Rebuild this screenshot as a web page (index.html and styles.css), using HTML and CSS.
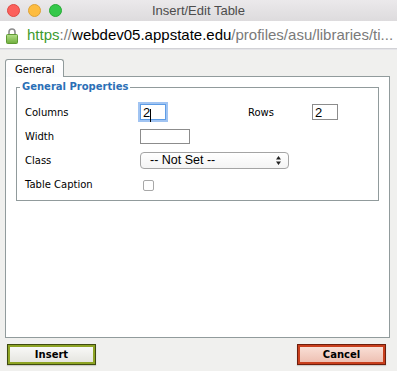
FILE: index.html
```html
<!DOCTYPE html>
<html lang="en">
<head>
    <meta charset="UTF-8">
    <title>Insert/Edit Table</title>
    <link rel="stylesheet" href="styles.css">
</head>
<body>

    <!-- window title -->
    <div class="titlebar">
        <div class="lights">
            <span class="light red"></span>
            <span class="light yellow"></span>
            <span class="light green"></span>
        </div>
        <div class="title">Insert/Edit Table</div>
    </div>

    <!-- address bar -->
    <div class="urlbar">
        <svg class="lock" width="12" height="17" viewBox="0 0 12 17">
            <defs>
                <linearGradient id="lockBody" x1="0" y1="0" x2="0" y2="1">
                    <stop offset="0" stop-color="#b5e08a"/>
                    <stop offset="1" stop-color="#6fae3c"/>
                </linearGradient>
            </defs>
            <path d="M3 7.5V5a3 3 0 0 1 6 0v2.5" fill="none" stroke="#8d8d8d" stroke-width="1.6"/>
            <rect x="0.5" y="7.5" width="11" height="9" rx="1" fill="url(#lockBody)" stroke="#5f9a34"/>
        </svg>
        <div class="url"><span class="scheme">https</span><span class="dim">://</span><span class="host">webdev05.appstate.edu</span><span class="dim">/profiles/asu/libraries/ti...</span></div>
    </div>

    <!-- dialog -->
    <div class="dialog">
        <div class="tabs">
            <span class="tab current">General</span>
        </div>

        <div class="panel">
            <fieldset>
                <legend>General Properties</legend>
                <div class="form-grid">
                    <label>Columns</label>
                    <div><input type="text" class="num focused" value="2"><span class="caret"></span></div>
                    <label>Rows</label>
                    <div><input type="text" class="num" value="2"></div>

                    <label>Width</label>
                    <div class="wide"><input type="text" class="size"></div>

                    <label>Class</label>
                    <div class="wide">
                        <span class="select">
                            -- Not Set --
                            <svg class="arrows" width="7" height="11" viewBox="0 0 7 11">
                                <path d="M3.5 1L6 4.5H1z M3.5 10L6 6.5H1z" fill="#222"/>
                            </svg>
                        </span>
                    </div>

                    <label>Table Caption</label>
                    <div class="wide"><input type="checkbox" class="check"></div>
                </div>
            </fieldset>
        </div>

        <div class="buttons">
            <button class="btn insert">Insert</button>
            <button class="btn cancel">Cancel</button>
        </div>
    </div>

</body>
</html>
```

FILE: styles.css
```css
html, body {
    margin: 0;
    padding: 0;
}

body {
    width: 397px;
    height: 371px;
    background-color: #f0f0ee;
    font-family: "DejaVu Sans", Verdana, sans-serif;
    font-size: 10px;
    color: #000;
    display: flex;
    flex-direction: column;
    overflow: hidden;
}

/* title bar */
.titlebar {
    height: 21px;
    display: flex;
    align-items: center;
    position: relative;
    background: linear-gradient(#ebe9eb, #dddbdd);
}

.lights {
    display: flex;
    gap: 8px;
    padding-left: 7px;
}

.light {
    width: 11px;
    height: 11px;
    border-radius: 50%;
    border: 0.5px solid;
}

.light.red { background-color: #fc605c; border-color: #de4a44; }
.light.yellow { background-color: #fdbc40; border-color: #dea236; }
.light.green { background-color: #34c84a; border-color: #27aa35; }

.title {
    position: absolute;
    left: 0;
    right: 0;
    top: 3px;
    text-align: center;
    font-family: "Liberation Sans", Arial, sans-serif;
    font-size: 13px;
    color: #4c4c4c;
}

/* address bar */
.urlbar {
    height: 27px;
    background-color: #ffffff;
    display: flex;
    align-items: center;
    padding-left: 6px;
    border-bottom: 1px solid #d2d2d6;
    box-shadow: 0 1px 0 #e4e4e8;
}

.lock {
    margin-right: 9px;
    margin-top: 1px;
}

.url {
    font-family: "Liberation Sans", Arial, sans-serif;
    font-size: 15px;
    white-space: nowrap;
    color: #000;
}

.url .scheme { color: #3d9b2f; }
.url .dim { color: #7a7a7a; }

/* dialog */
.dialog {
    flex: 1;
    display: flex;
    flex-direction: column;
    padding: 10px 0 5px 5px;
}

.tabs {
    display: flex;
    height: 17px;
}

.tab {
    border: 1px solid #919b9c;
    border-bottom: none;
    border-radius: 3px 3px 0 0;
    background: linear-gradient(#ffffff, #fcfcfe);
    padding: 3px 9px 0 9px;
    position: relative;
    z-index: 1;
    box-sizing: border-box;
    margin-bottom: -1px;
    height: 18px;
    line-height: 14px;
}

.panel {
    width: 385px;
    height: 262px;
    box-sizing: border-box;
    border: 1px solid #919b9c;
    background-color: #ffffff;
    padding: 4px 10px 0 10px;
}

fieldset {
    margin: 0;
    border: 1px solid #919b9c;
    padding: 0 8px 4px 8px;
}

legend {
    color: #2b6fb6;
    font-weight: bold;
    padding: 0 2px;
    margin-left: -5px;
    line-height: 12px;
}

.form-grid {
    display: grid;
    grid-template-columns: 115px 108px 64px auto;
    grid-auto-rows: 24px;
    align-items: center;
    padding-top: 7px;
}

.form-grid .wide {
    grid-column: 2 / 5;
}

.form-grid div {
    display: flex;
    align-items: center;
    position: relative;
}

input[type="text"] {
    font-family: "Liberation Sans", Arial, sans-serif;
    font-size: 13px;
    border: 1px solid #8c8c8c;
    padding: 0 2px;
    margin: 0;
    box-sizing: border-box;
    height: 16px;
    background-color: #ffffff;
    outline: none;
}

input.num {
    width: 26px;
}

input.focused {
    border-color: #5e9de6;
    box-shadow: 0 0 0 2px rgba(110, 165, 235, 0.65);
}

.caret {
    position: absolute;
    left: 10px;
    top: 5px;
    width: 1px;
    height: 13px;
    background-color: #000;
}

input.size {
    width: 50px;
    height: 15px;
}

.select {
    width: 149px;
    height: 17px;
    box-sizing: border-box;
    border: 1px solid #a4a4a4;
    border-radius: 4px;
    background: linear-gradient(#ffffff, #f4f4f4);
    font-family: "Liberation Sans", Arial, sans-serif;
    font-size: 12.5px;
    line-height: 15px;
    padding-left: 9px;
    position: relative;
    margin-top: 1px;
}

.arrows {
    position: absolute;
    right: 6px;
    top: 2px;
}

.check {
    appearance: none;
    -webkit-appearance: none;
    width: 11px;
    height: 11px;
    margin: 2px 0 0 3px;
    border: 1px solid #a8a8a8;
    border-radius: 2px;
    background-color: #ffffff;
}

/* buttons */
.buttons {
    display: flex;
    justify-content: space-between;
    padding: 6px 11px 0 2px;
}

.btn {
    width: 89px;
    height: 21px;
    font-family: "DejaVu Sans", Verdana, sans-serif;
    font-size: 10px;
    font-weight: bold;
    color: #000;
    padding: 0;
    cursor: pointer;
}

.btn.insert {
    border: 1px solid #3f4b10;
    background: linear-gradient(#fbfbf9, #e3e3de);
    box-shadow: inset 0 0 0 2px #8ea425, 0 1px 1px rgba(0, 0, 0, 0.15);
}

.btn.cancel {
    border: 1px solid #6e1e0c;
    background: linear-gradient(#fbe3da, #ecbcae);
    box-shadow: inset 0 0 0 2px #c83f1d, 0 1px 1px rgba(0, 0, 0, 0.15);
}
```
